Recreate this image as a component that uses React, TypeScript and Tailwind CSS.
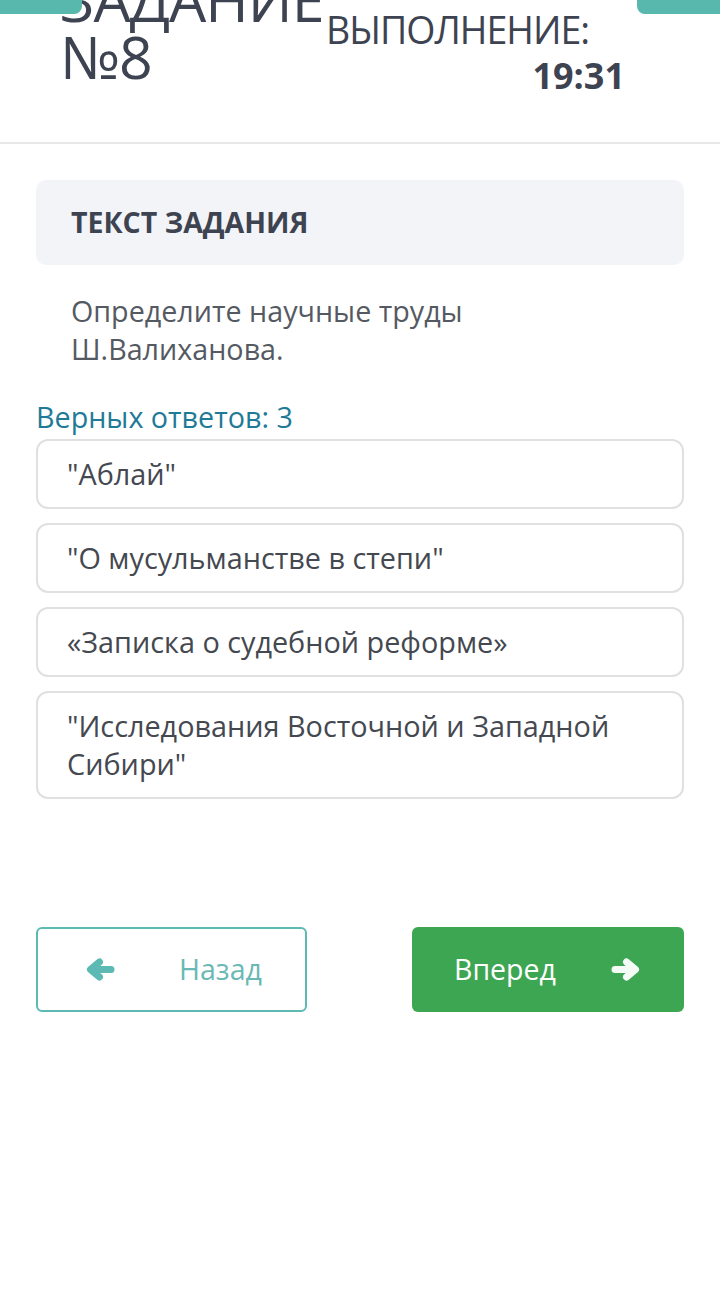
import {ReactNode} from "react";

const options = [
	'"Аблай"',
	'"О мусульманстве в степи"',
	"«Записка о судебной реформе»",
	'"Исследования Восточной и Западной Сибири"',
];

// chunky rounded arrow, like the icon font used on the page
function Arrow({left, className}: { left?: boolean, className: string }) {
	return (
		 <svg viewBox="0 0 29 23" className={className} style={left ? {transform: "scaleX(-1)"} : undefined}>
			 <path d="M4 11.5H24M15.5 4L24.5 11.5L15.5 19" fill="none" stroke="currentColor" strokeWidth="7"
						 strokeLinecap="round" strokeLinejoin="round"/>
		 </svg>
	);
}

function Option({children}: { children: ReactNode }) {
	return (
		 <div className="border-2 border-[#e0e0e0] rounded-[12px] pl-[29px] pr-[20px] py-[14px] text-[28.8px] leading-[38px] text-[#444850]">
			 {children}
		 </div>
	);
}

export default function App() {
	return (
		 <div className="relative w-[720px] h-[1310px] bg-white overflow-hidden"
					style={{fontFamily: '"Open Sans", sans-serif'}}>
			 {/* teal tabs peeking from the top */}
			 <div className="absolute left-0 top-0 w-[82px] h-[14px] bg-[#58b8ae] rounded-br-[8px] z-10"/>
			 <div className="absolute right-0 top-0 w-[83px] h-[14px] bg-[#58b8ae] rounded-bl-[8px] z-10"/>

			 <header className="h-[144px] border-b-2 border-[#e8e8e8] flex overflow-hidden text-[#3d4350]">
				 <div className="pl-[60px] w-[326px] mt-[-29px] text-[59px] leading-[57px] tracking-[-1px]">
					 ЗАДАНИЕ<br/>№8
				 </div>
				 <div className="w-[299px] flex flex-col items-end pt-[10px]">
					 <div className="self-start text-[37.5px] leading-[40px] tracking-[-1px]">ВЫПОЛНЕНИЕ:</div>
					 <div className="mt-[6px] text-[36px] leading-[40px] font-bold">19:31</div>
				 </div>
			 </header>

			 <main className="px-[36px]">
				 <div className="mt-[36px] h-[85px] bg-[#f3f4f7] rounded-[10px] px-[35px] flex items-center">
					 <span className="text-[28.5px] font-bold text-[#3d4350] uppercase">Текст задания</span>
				 </div>

				 <p className="mt-[27px] pl-[35px] pr-[100px] text-[28.7px] leading-[38px] text-[#555a62]">
					 Определите научные труды Ш.Валиханова.
				 </p>

				 <div className="mt-[30px] text-[28.7px] leading-[38px] text-[#1e7a96]">Верных ответов: 3</div>

				 <div className="mt-[3px] flex flex-col gap-[14px]">
					 {options.map(o => <Option key={o}>{o}</Option>)}
				 </div>

				 <div className="mt-[128px] flex justify-between">
					 <button
							className="w-[271px] h-[85px] border-2 border-[#5cbab3] rounded-[6px] flex items-center pl-[48px] text-[#6ab9b5]">
						 <Arrow left className="w-[29px] h-[23px] text-[#5cb9b3]"/>
						 <span className="ml-[64px] text-[28.5px]">Назад</span>
					 </button>
					 <button
							className="w-[272px] h-[85px] bg-[#3da653] rounded-[6px] flex items-center pl-[42px] text-white">
						 <span className="text-[28.5px]">Вперед</span>
						 <Arrow className="ml-[55px] w-[29px] h-[23px] text-[#f4fbf5]"/>
					 </button>
				 </div>
			 </main>
		 </div>
	);
}
